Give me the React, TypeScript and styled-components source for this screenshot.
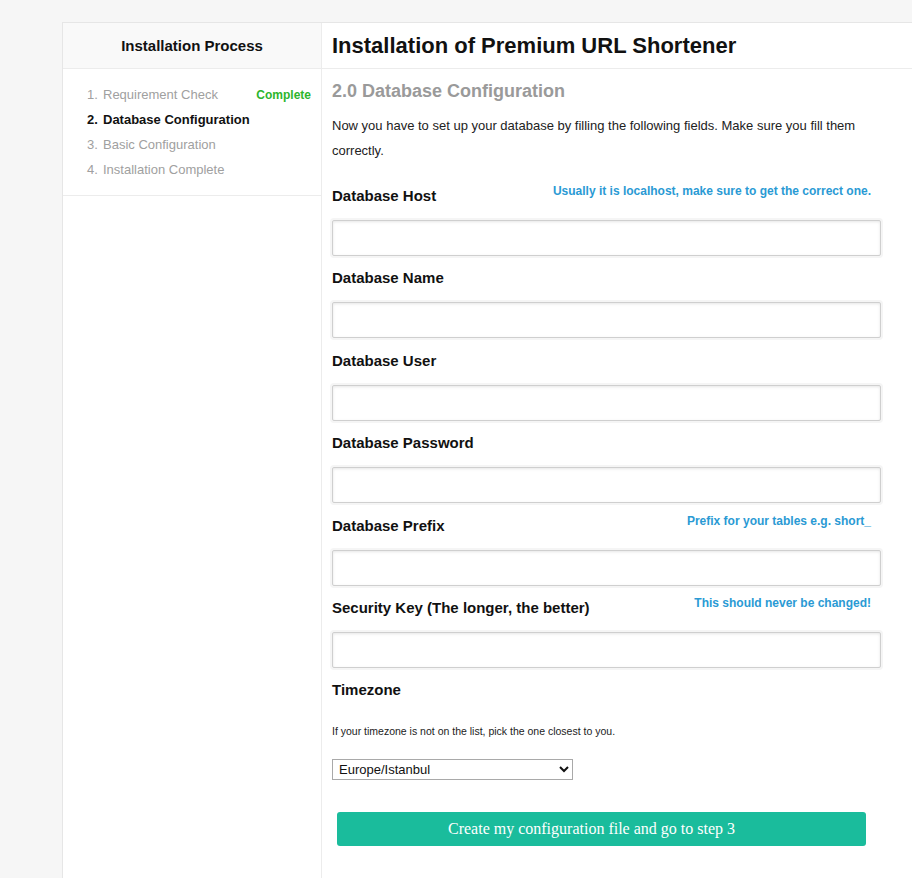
import React from "react";
import styled, { createGlobalStyle } from "styled-components";

const Global = createGlobalStyle`
  html, body { margin: 0; padding: 0; }
  body {
    background: #f6f6f6;
    font-family: "Liberation Sans", Arial, sans-serif;
    overflow: hidden;
  }
`;

const Page = styled.div`
  padding: 22px 0 0 62px;
`;

const Frame = styled.div`
  display: flex;
  width: 880px;
  min-height: 900px;
  border-top: 1px solid #e6e6e6;
  border-left: 1px solid #e6e6e6;
  background: #fff;
`;

const Sidebar = styled.aside`
  width: 258px;
  flex: none;
  border-right: 1px solid #ececec;
`;

const SideHeader = styled.div`
  height: 45px;
  display: flex;
  align-items: center;
  justify-content: center;
  background: #f9f9f9;
  border-bottom: 1px solid #ececec;
  font-size: 15px;
  font-weight: bold;
  color: #111;
`;

const Steps = styled.ol`
  list-style: none;
  margin: 0;
  padding: 13px 10px 13px 24px;
  border-bottom: 1px solid #ececec;
`;

const Step = styled.li<{ $state: "done" | "active" | "todo" }>`
  display: flex;
  align-items: center;
  height: 25px;
  font-size: 13px;
  font-weight: ${(p) => (p.$state === "active" ? "bold" : "normal")};
  color: ${(p) => (p.$state === "active" ? "#111" : "#a0a0a0")};
`;

const StepNum = styled.span`
  width: 16px;
  flex: none;
`;

const StepName = styled.span`
  flex: 1;
`;

const Badge = styled.span`
  color: #2db52d;
  font-size: 12px;
  font-weight: bold;
`;

const Main = styled.main`
  flex: 1;
  display: flex;
  flex-direction: column;
`;

const MainHeader = styled.div`
  height: 45px;
  display: flex;
  align-items: center;
  padding: 0 10px;
  border-bottom: 1px solid #ececec;
`;

const Title = styled.h1`
  margin: 0;
  font-size: 22px;
  font-weight: bold;
  color: #111;
`;

const Content = styled.div`
  padding: 10px 0 0 10px;
  width: 549px;
`;

const SubTitle = styled.h2`
  margin: 0;
  font-size: 18px;
  line-height: 24px;
  font-weight: bold;
  color: #9a9a9a;
`;

const Intro = styled.p`
  margin: 10px 0 0;
  font-size: 13px;
  line-height: 25px;
  color: #222;
`;

const Field = styled.div`
  margin-top: 12.4px;
`;

const FirstField = styled(Field)`
  margin-top: 23px;
`;

const LabelRow = styled.div<{ $tight?: boolean }>`
  display: flex;
  justify-content: space-between;
  align-items: flex-start;
  height: 20px;
  margin-bottom: ${(p) => (p.$tight ? "0" : "14px")};
`;

const Label = styled.label`
  font-size: 15px;
  line-height: 20px;
  font-weight: bold;
  color: #111;
`;

const Hint = styled.span`
  font-size: 12px;
  line-height: 20px;
  margin-top: -5px;
  margin-right: 10px;
  font-weight: bold;
  color: #2a9ad4;
`;

const Input = styled.input`
  display: block;
  box-sizing: border-box;
  width: 549px;
  height: 36px;
  margin: 0;
  border: 1px solid #cfcfcf;
  border-radius: 2px;
  background: #fff;
  box-shadow: 0 0 0 2px #f5f5f5, inset 0 1px 3px rgba(0, 0, 0, 0.1);
  outline: none;
`;

const Small = styled.p`
  margin: 24px 0 0;
  font-size: 10.5px;
  line-height: 14px;
  color: #222;
`;

const Select = styled.select`
  display: block;
  margin-top: 21px;
  width: 241px;
  height: 21px;
  font-family: "Liberation Sans", Arial, sans-serif;
  font-size: 13px;
  color: #111;
  border: 1px solid #a9a9a9;
  border-radius: 0;
  background: #fff;
  padding: 0 2px;
`;

const Submit = styled.button`
  display: block;
  margin: 32px 0 0 5px;
  width: 529px;
  height: 34px;
  padding: 0 20px 0 0;
  border: none;
  border-radius: 3px;
  background: #1abc9c;
  color: #fff;
  font-family: "Liberation Serif", "Times New Roman", serif;
  font-size: 16px;
  cursor: pointer;
`;

type FieldDef = { label: string; hint?: string };

const fields: FieldDef[] = [
  { label: "Database Host", hint: "Usually it is localhost, make sure to get the correct one." },
  { label: "Database Name" },
  { label: "Database User" },
  { label: "Database Password" },
  { label: "Database Prefix", hint: "Prefix for your tables e.g. short_" },
  { label: "Security Key (The longer, the better)", hint: "This should never be changed!" },
];

export default function App() {
  return (
    <>
      <Global />
      <Page>
        <Frame>
          <Sidebar>
            <SideHeader>Installation Process</SideHeader>
            <Steps>
              <Step $state="done">
                <StepNum>1.</StepNum>
                <StepName>Requirement Check</StepName>
                <Badge>Complete</Badge>
              </Step>
              <Step $state="active">
                <StepNum>2.</StepNum>
                <StepName>Database Configuration</StepName>
              </Step>
              <Step $state="todo">
                <StepNum>3.</StepNum>
                <StepName>Basic Configuration</StepName>
              </Step>
              <Step $state="todo">
                <StepNum>4.</StepNum>
                <StepName>Installation Complete</StepName>
              </Step>
            </Steps>
          </Sidebar>
          <Main>
            <MainHeader>
              <Title>Installation of Premium URL Shortener</Title>
            </MainHeader>
            <Content>
              <SubTitle>2.0 Database Configuration</SubTitle>
              <Intro>
                Now you have to set up your database by filling the following fields. Make sure you fill them correctly.
              </Intro>
              {fields.map((f, i) => {
                const Wrap = i === 0 ? FirstField : Field;
                return (
                  <Wrap key={f.label}>
                    <LabelRow>
                      <Label>{f.label}</Label>
                      {f.hint && <Hint>{f.hint}</Hint>}
                    </LabelRow>
                    <Input type={f.label.includes("Password") ? "password" : "text"} />
                  </Wrap>
                );
              })}
              <Field>
                <LabelRow $tight>
                  <Label>Timezone</Label>
                </LabelRow>
                <Small>If your timezone is not on the list, pick the one closest to you.</Small>
                <Select defaultValue="Europe/Istanbul">
                  <option>Europe/London</option>
                  <option>Europe/Istanbul</option>
                  <option>America/New_York</option>
                </Select>
              </Field>
              <Submit>Create my configuration file and go to step 3</Submit>
            </Content>
          </Main>
        </Frame>
      </Page>
    </>
  );
}
